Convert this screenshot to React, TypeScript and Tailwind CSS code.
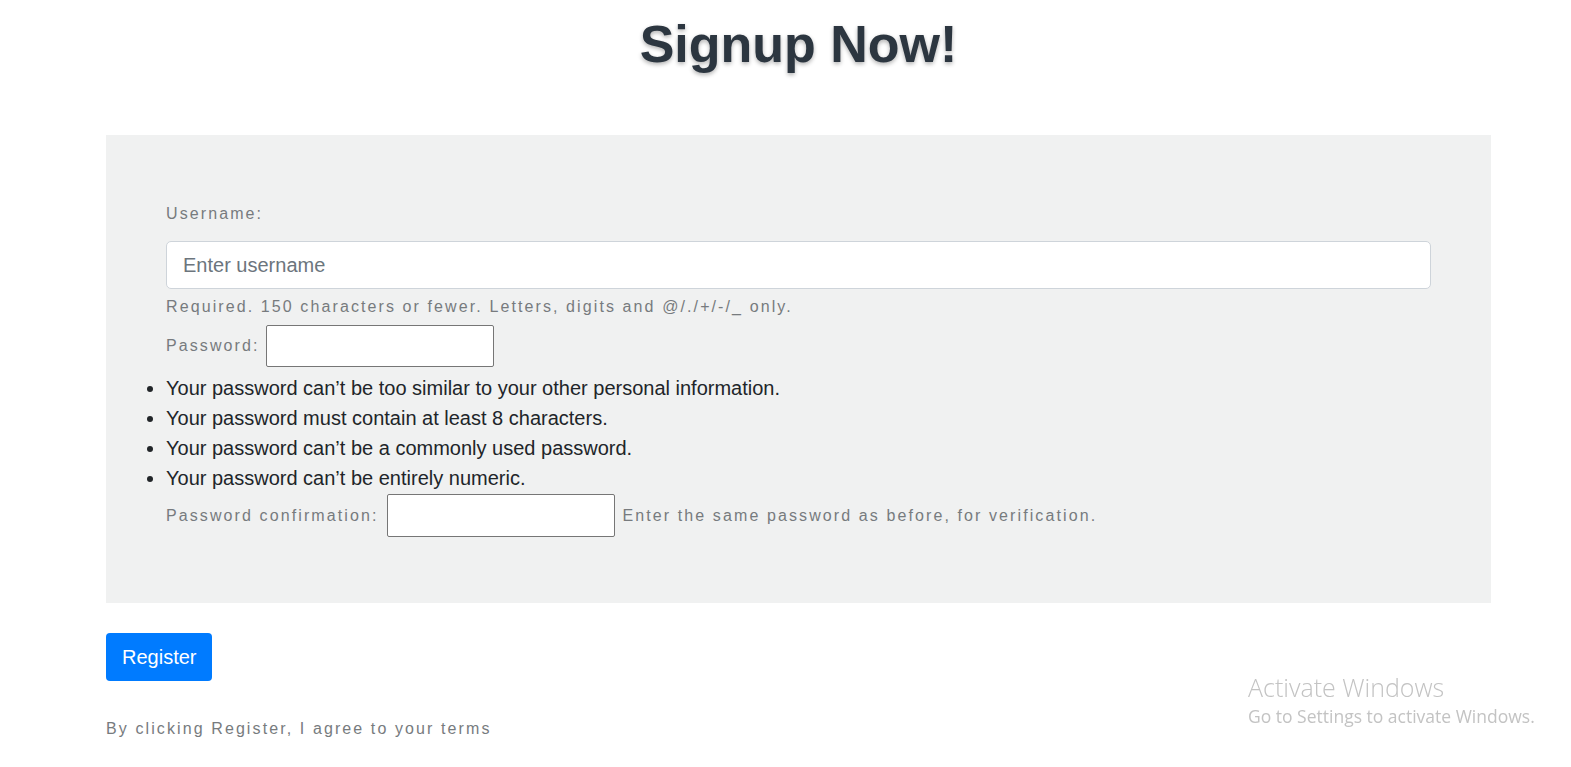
const rules = [
  "Your password can’t be too similar to your other personal information.",
  "Your password must contain at least 8 characters.",
  "Your password can’t be a commonly used password.",
  "Your password can’t be entirely numeric.",
];

const App = () => {
  return (
    <div className="min-h-screen bg-white font-['Liberation_Sans',Arial,sans-serif]">
      <div className="ml-[106px] w-[1385px]">
        <h1 className="pt-[13px] text-center text-[52px] font-bold leading-[62px] text-[#2c3640] [text-shadow:0_2px_4px_rgba(0,0,0,0.3)]">
          Signup Now!
        </h1>

        <form className="mt-[60px] bg-[#f0f1f1] px-[60px] pt-[67px] pb-[66px]" onSubmit={(e) => e.preventDefault()}>
          <label className="block text-[16px] leading-[24px] tracking-[2.1px] text-[#777b7e]">Username:</label>
          <input
            type="text"
            placeholder="Enter username"
            className="mt-[15px] block h-[48px] w-full rounded-[5px] border border-[#ced4da] bg-white px-[16px] text-[20px] text-[#495057] placeholder:text-[#6c757d] outline-none"
          />
          <p className="mt-[6px] text-[16px] leading-[24px] tracking-[2.1px] text-[#777b7e]">
            Required. 150 characters or fewer. Letters, digits and @/./+/-/_ only.
          </p>

          <div className="mt-[6px] flex items-center gap-[6px]">
            <label className="text-[16px] leading-[24px] tracking-[2.1px] text-[#777b7e]">Password:</label>
            <input type="password" className="h-[42px] w-[228px] rounded-[2px] border border-[#767676] bg-white outline-none" />
          </div>

          <ul className="mt-[6px] list-outside list-disc text-[20px] leading-[30px] text-[#212529]">
            {rules.map((rule) => (
              <li key={rule}>{rule}</li>
            ))}
          </ul>

          <div className="mt-[1px] flex items-center gap-[8px]">
            <label className="text-[16px] leading-[24px] tracking-[2.1px] text-[#777b7e]">Password confirmation:</label>
            <input type="password" className="h-[43px] w-[228px] rounded-[2px] border border-[#767676] bg-white outline-none" />
            <span className="text-[16px] leading-[24px] tracking-[2.1px] text-[#777b7e]">
              Enter the same password as before, for verification.
            </span>
          </div>
        </form>

        <button
          type="submit"
          className="mt-[30px] h-[48px] rounded-[4px] bg-[#007bff] px-[16px] text-[20px] leading-[30px] text-white"
        >
          Register
        </button>

        <p className="mt-[36px] text-[16px] leading-[24px] tracking-[2.1px] text-[#777b7e]">
          By clicking Register, I agree to your terms
        </p>
      </div>

      <div className="pointer-events-none fixed left-[1248px] top-[670px] font-['Open_Sans',sans-serif] text-[#c3c3c3]">
        <div className="text-[25px] leading-[34px] font-light">Activate Windows</div>
        <div className="text-[17.5px] leading-[24px]">Go to Settings to activate Windows.</div>
      </div>
    </div>
  );
};

export default App;
